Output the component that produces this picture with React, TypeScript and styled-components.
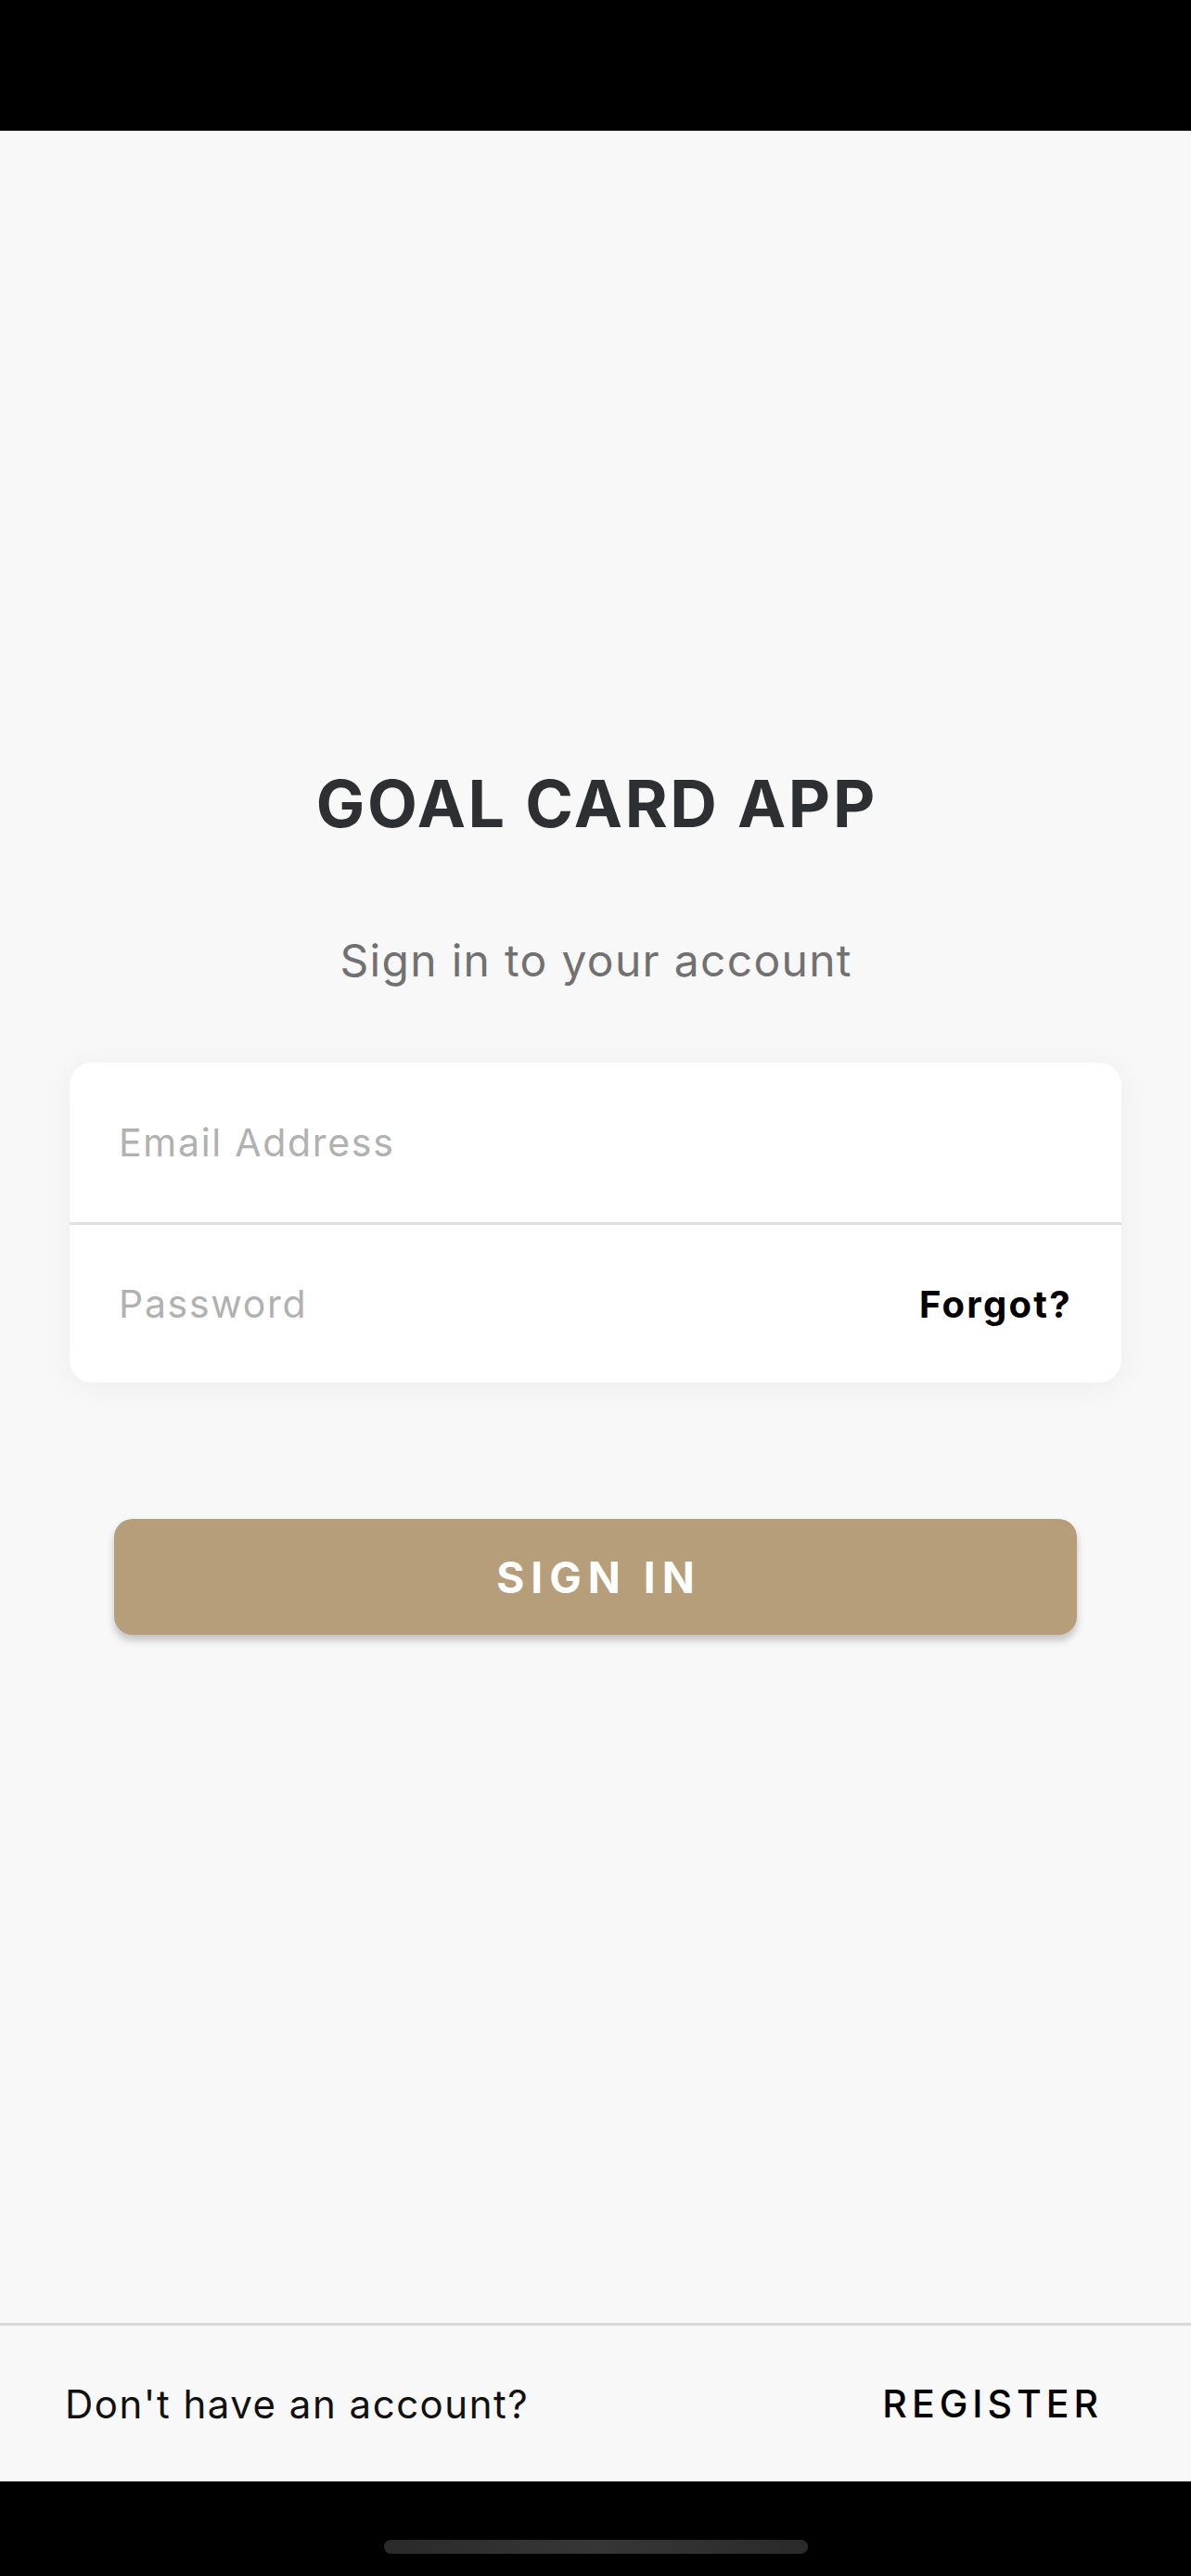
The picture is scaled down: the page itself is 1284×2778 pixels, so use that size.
import React from "react";
import styled, { createGlobalStyle } from "styled-components";

const GlobalStyle = createGlobalStyle`
  html, body {
    margin: 0;
    padding: 0;
    background: #000;
  }
  * { box-sizing: border-box; }
  body {
    font-family: Inter, "Noto Sans", "Liberation Sans", sans-serif;
  }
`;

const Screen = styled.div`
  display: flex;
  flex-direction: column;
  min-height: 100vh;
  background: #f8f8f8;
`;

const StatusBar = styled.div`
  height: 141px;
  background: #000;
  flex-shrink: 0;
`;

const Main = styled.main`
  flex: 1;
  display: flex;
  flex-direction: column;
  align-items: stretch;
  padding: 691px 75px 0;
`;

const Title = styled.h1`
  margin: 0;
  text-align: center;
  font-size: 70px;
  line-height: 70px;
  font-weight: 700;
  letter-spacing: 2.7px;
  text-indent: 2.7px;
  color: #2e2f33;
`;

const Subtitle = styled.p`
  margin: 110px 0 0;
  text-align: center;
  font-size: 48px;
  line-height: 48px;
  font-weight: 400;
  letter-spacing: 1.3px;
  text-indent: 1.3px;
  color: #717171;
`;

const Card = styled.div`
  margin-top: 86px;
  background: #fff;
  border-radius: 24px;
  box-shadow: 0 4px 34px rgba(20, 20, 40, 0.05);
  display: flex;
  flex-direction: column;
`;

const FieldRow = styled.div<{ $divider?: boolean }>`
  height: ${(p) => (p.$divider ? 173 : 172)}px;
  display: flex;
  align-items: center;
  padding: 0 53px 0 53px;
  border-top: ${(p) => (p.$divider ? "3px solid #e0e0e0" : "none")};
`;

const Field = styled.input`
  flex: 1;
  min-width: 0;
  border: none;
  outline: none;
  background: transparent;
  font-family: inherit;
  font-size: 41px;
  letter-spacing: 1.7px;
  color: #222;
  padding: 0;
  &::placeholder {
    color: #b1b1b1;
  }
`;

const Forgot = styled.button`
  border: none;
  background: none;
  padding: 0;
  font-family: inherit;
  font-size: 40px;
  font-weight: 700;
  letter-spacing: 2.3px;
  color: #000;
  cursor: pointer;
`;

const SignInButton = styled.button`
  margin: 147px 48px 0;
  height: 125px;
  border: none;
  border-radius: 20px;
  background: #b59e79;
  box-shadow: 0 6px 9px rgba(0, 0, 0, 0.22);
  color: #fff;
  font-family: inherit;
  font-size: 46px;
  font-weight: 700;
  letter-spacing: 7px;
  text-indent: 7px;
  cursor: pointer;
`;

const Footer = styled.footer`
  height: 171px;
  flex-shrink: 0;
  border-top: 3px solid #d9d9d9;
  background: #f8f8f8;
  display: flex;
  align-items: center;
  justify-content: space-between;
  padding: 0 95px 0 70px;
`;

const FooterText = styled.span`
  font-size: 42px;
  font-weight: 400;
  letter-spacing: 1.5px;
  color: #111;
`;

const RegisterLink = styled.button`
  border: none;
  background: none;
  padding: 0;
  font-family: inherit;
  font-size: 41px;
  font-weight: 500;
  letter-spacing: 5px;
  color: #000;
  cursor: pointer;
`;

const HomeBar = styled.div`
  height: 102px;
  flex-shrink: 0;
  background: #000;
  display: flex;
  justify-content: center;
  padding-top: 63px;
`;

const HomeIndicator = styled.div`
  width: 457px;
  height: 15px;
  border-radius: 8px;
  background: linear-gradient(90deg, #2a2a2a, #363636 50%, #2a2a2a);
`;

export default function App() {
  return (
    <>
      <GlobalStyle />
      <Screen>
        <StatusBar />
        <Main>
          <Title>GOAL CARD APP</Title>
          <Subtitle>Sign in to your account</Subtitle>
          <Card>
            <FieldRow>
              <Field type="email" placeholder="Email Address" />
            </FieldRow>
            <FieldRow $divider>
              <Field type="password" placeholder="Password" />
              <Forgot>Forgot?</Forgot>
            </FieldRow>
          </Card>
          <SignInButton>SIGN IN</SignInButton>
        </Main>
        <Footer>
          <FooterText>Don't have an account?</FooterText>
          <RegisterLink>REGISTER</RegisterLink>
        </Footer>
        <HomeBar>
          <HomeIndicator />
        </HomeBar>
      </Screen>
    </>
  );
}
